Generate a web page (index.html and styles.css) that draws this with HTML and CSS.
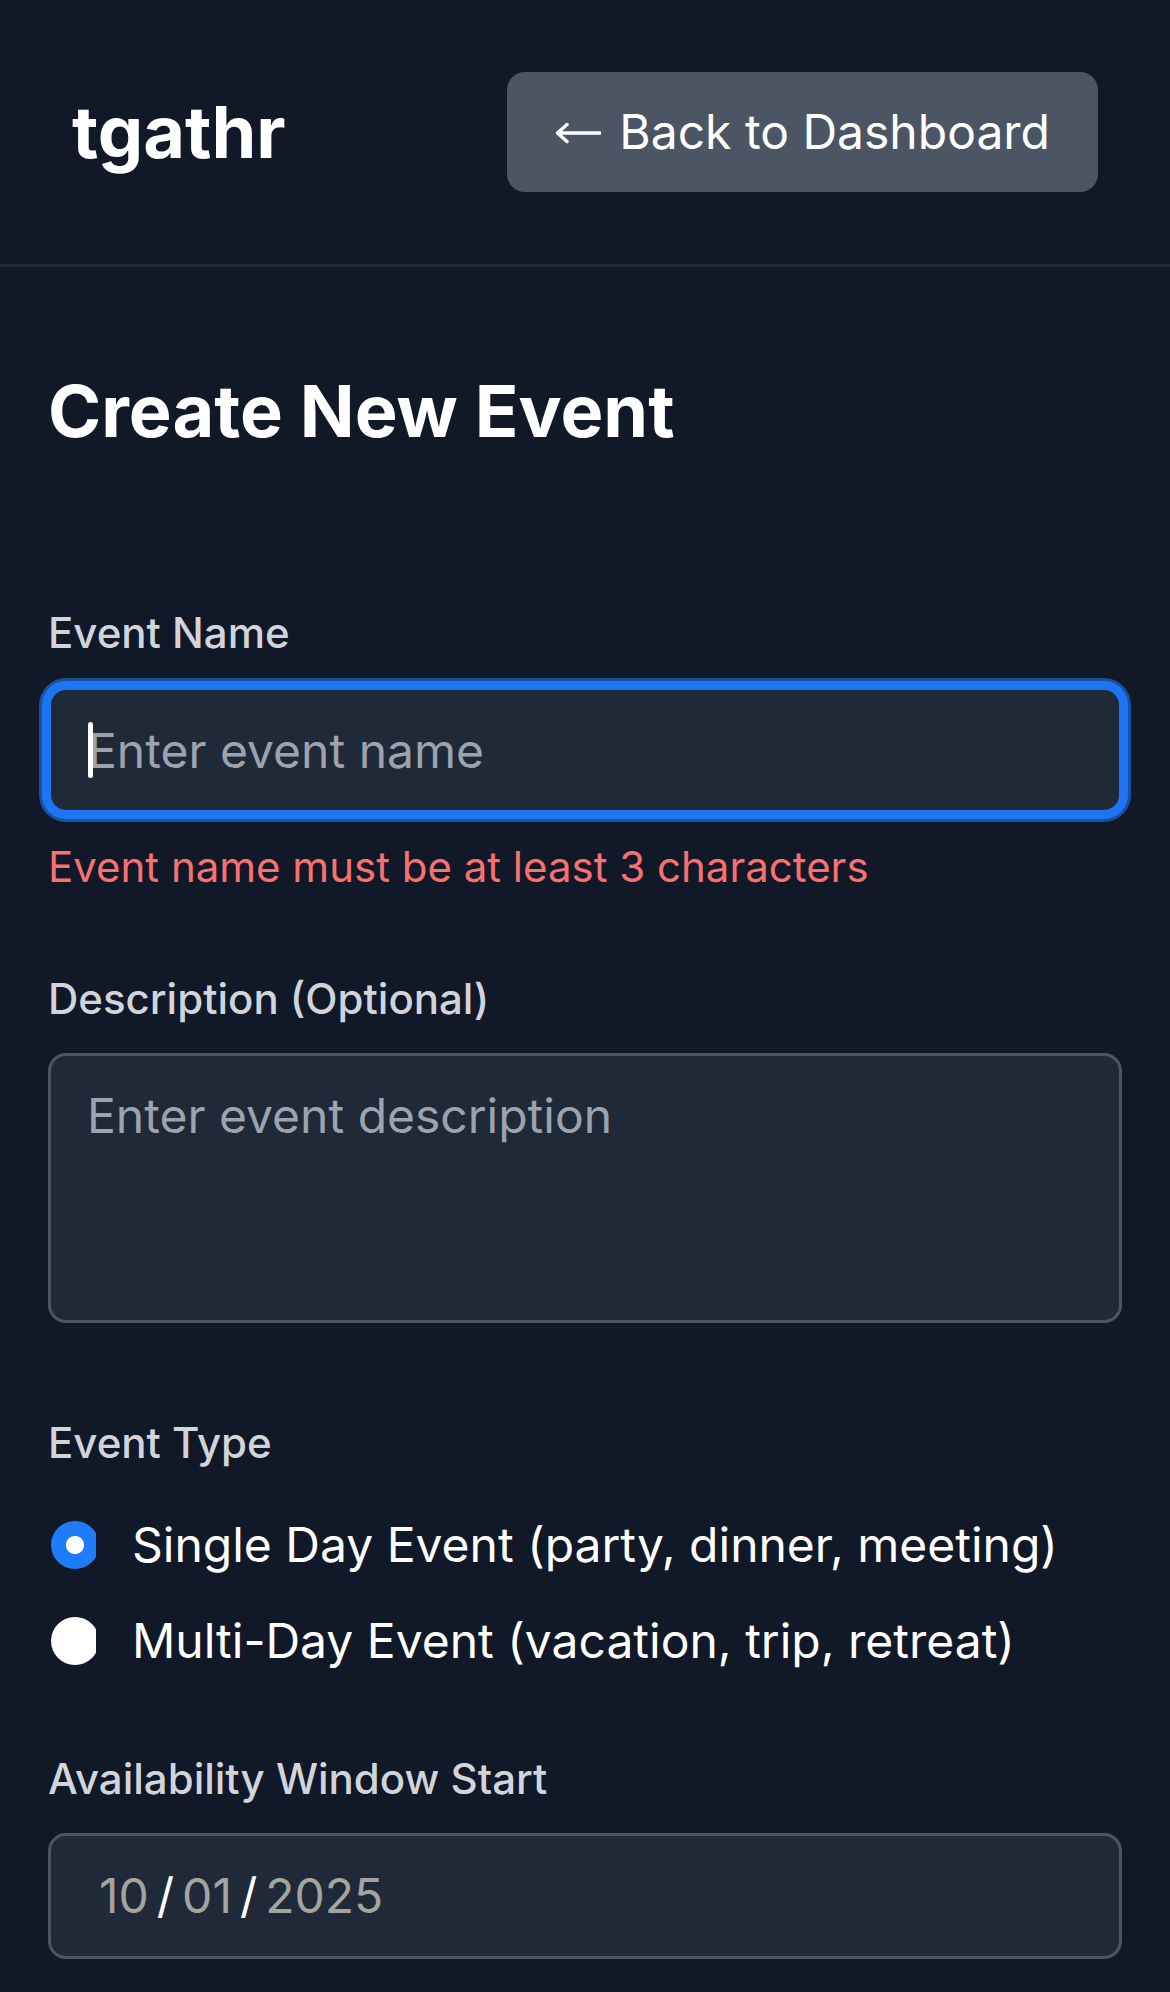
FILE: index.html
```html
<!DOCTYPE html>
<html lang="en">
<head>
<meta charset="utf-8">
<title>tgathr - Create New Event</title>
<link rel="stylesheet" href="styles.css">
</head>
<body>
<header class="topbar">
  <div class="logo">tgathr</div>
  <button class="back-btn" type="button"><svg class="arrow" width="46" height="24" viewBox="0 0 46 24" aria-hidden="true"><path d="M45 12H3M12 3.5L2.5 12L12 20.5" fill="none" stroke="#ffffff" stroke-width="3.4" stroke-linecap="round" stroke-linejoin="round"/></svg><span>Back to Dashboard</span></button>
</header>
<main class="page">
  <h1 class="title">Create New Event</h1>
  <form class="form">
    <div class="field">
      <label class="label" for="name">Event Name</label>
      <div class="input-wrap">
        <input id="name" class="input input-focus" type="text" placeholder="Enter event name">
        <span class="caret"></span>
      </div>
      <p class="error">Event name must be at least 3 characters</p>
    </div>
    <div class="field">
      <label class="label" for="desc">Description (Optional)</label>
      <textarea id="desc" class="input textarea" rows="3" placeholder="Enter event description"></textarea>
    </div>
    <div class="field">
      <div class="label label-type">Event Type</div>
      <div class="radios">
        <label class="radio-row"><input class="radio" type="radio" name="type" checked><span>Single Day Event (party, dinner, meeting)</span></label>
        <label class="radio-row"><input class="radio" type="radio" name="type"><span>Multi-Day Event (vacation, trip, retreat)</span></label>
      </div>
    </div>
    <div class="field">
      <div class="label">Availability Window Start</div>
      <div class="input date"><span class="seg">10</span><span class="sep">/</span><span class="seg">01</span><span class="sep">/</span><span class="seg">2025</span></div>
    </div>
  </form>
</main>
</body>
</html>
```
FILE: styles.css
```css
* { box-sizing: border-box; }
html, body { margin: 0; padding: 0; }
body {
  background: #111827;
  color: #ffffff;
  font-family: Inter, "Noto Sans", sans-serif;
  font-size: 48px;
  line-height: 72px;
  min-height: 1992px;
}
.topbar {
  display: flex;
  align-items: center;
  justify-content: space-between;
  padding: 72px 72px;
  border-bottom: 3px solid #1f2937;
}
.logo {
  font-size: 72px;
  line-height: 96px;
  font-weight: 700;
  color: #ffffff;
}
.back-btn {
  display: flex;
  align-items: center;
  gap: 18px;
  font-family: inherit;
  font-size: 48px;
  line-height: 72px;
  font-weight: 400;
  color: #ffffff;
  background: #4b5563;
  border: none;
  border-radius: 18px;
  padding: 24px 48px;
}
.arrow { display: block; flex: none; margin-top: 2px; }
.page {
  padding: 96px 48px;
}
.title {
  margin: 0 0 144px;
  font-size: 72px;
  line-height: 96px;
  font-weight: 700;
  color: #ffffff;
}
.form {
  display: flex;
  flex-direction: column;
  gap: 72px;
}
.field { display: flex; flex-direction: column; }
.label {
  display: block;
  font-size: 42px;
  line-height: 60px;
  font-weight: 500;
  color: #d1d5db;
  margin-bottom: 24px;
}
.label-type { margin-bottom: 36px; }
.input-wrap { position: relative; }
.input {
  display: block;
  width: 100%;
  font-family: inherit;
  font-size: 48px;
  line-height: 72px;
  color: #ffffff;
  background: #1f2937;
  border: 3px solid #4b5563;
  border-radius: 18px;
  padding: 24px 36px;
  margin: 0;
  outline: none;
}
.input::placeholder { color: #9ca3af; opacity: 1; }
.input-focus {
  border-color: #1d74f5;
  box-shadow: 0 0 0 6px #1d74f5, 0 0 0 9px #17519f;
  caret-color: transparent;
  height: 126px;
  padding-left: 37px;
}
.caret {
  position: absolute;
  left: 40px;
  top: 35px;
  width: 5px;
  height: 56px;
  border-radius: 3px;
  background: #ffffff;
}
.error {
  margin: 24px 0 0;
  font-size: 42px;
  line-height: 60px;
  color: #f87171;
}
.textarea {
  resize: none;
  height: 270px;
  margin-bottom: 18px;
}
.radios {
  display: flex;
  flex-direction: column;
  gap: 24px;
}
.radio-row {
  display: flex;
  align-items: center;
  gap: 33px;
  font-size: 48px;
  line-height: 72px;
  color: #ffffff;
}
.radio {
  appearance: none;
  -webkit-appearance: none;
  width: 48px;
  height: 48px;
  margin: 0 0 0 3px;
  border-radius: 50%;
  background: #ffffff;
  flex: none;
  clip-path: inset(0 3px 0 0);
}
.radio:checked {
  background: radial-gradient(circle at center, #ffffff 0 8.5px, #1f7cf8 9.5px);
}
.date {
  display: flex;
  align-items: center;
  height: 126px;
  padding-left: 48px;
  color: #a3a3a3;
}
.seg { color: #a3a3a3; }
.sep { color: #ffffff; padding: 0 8px; }
```
